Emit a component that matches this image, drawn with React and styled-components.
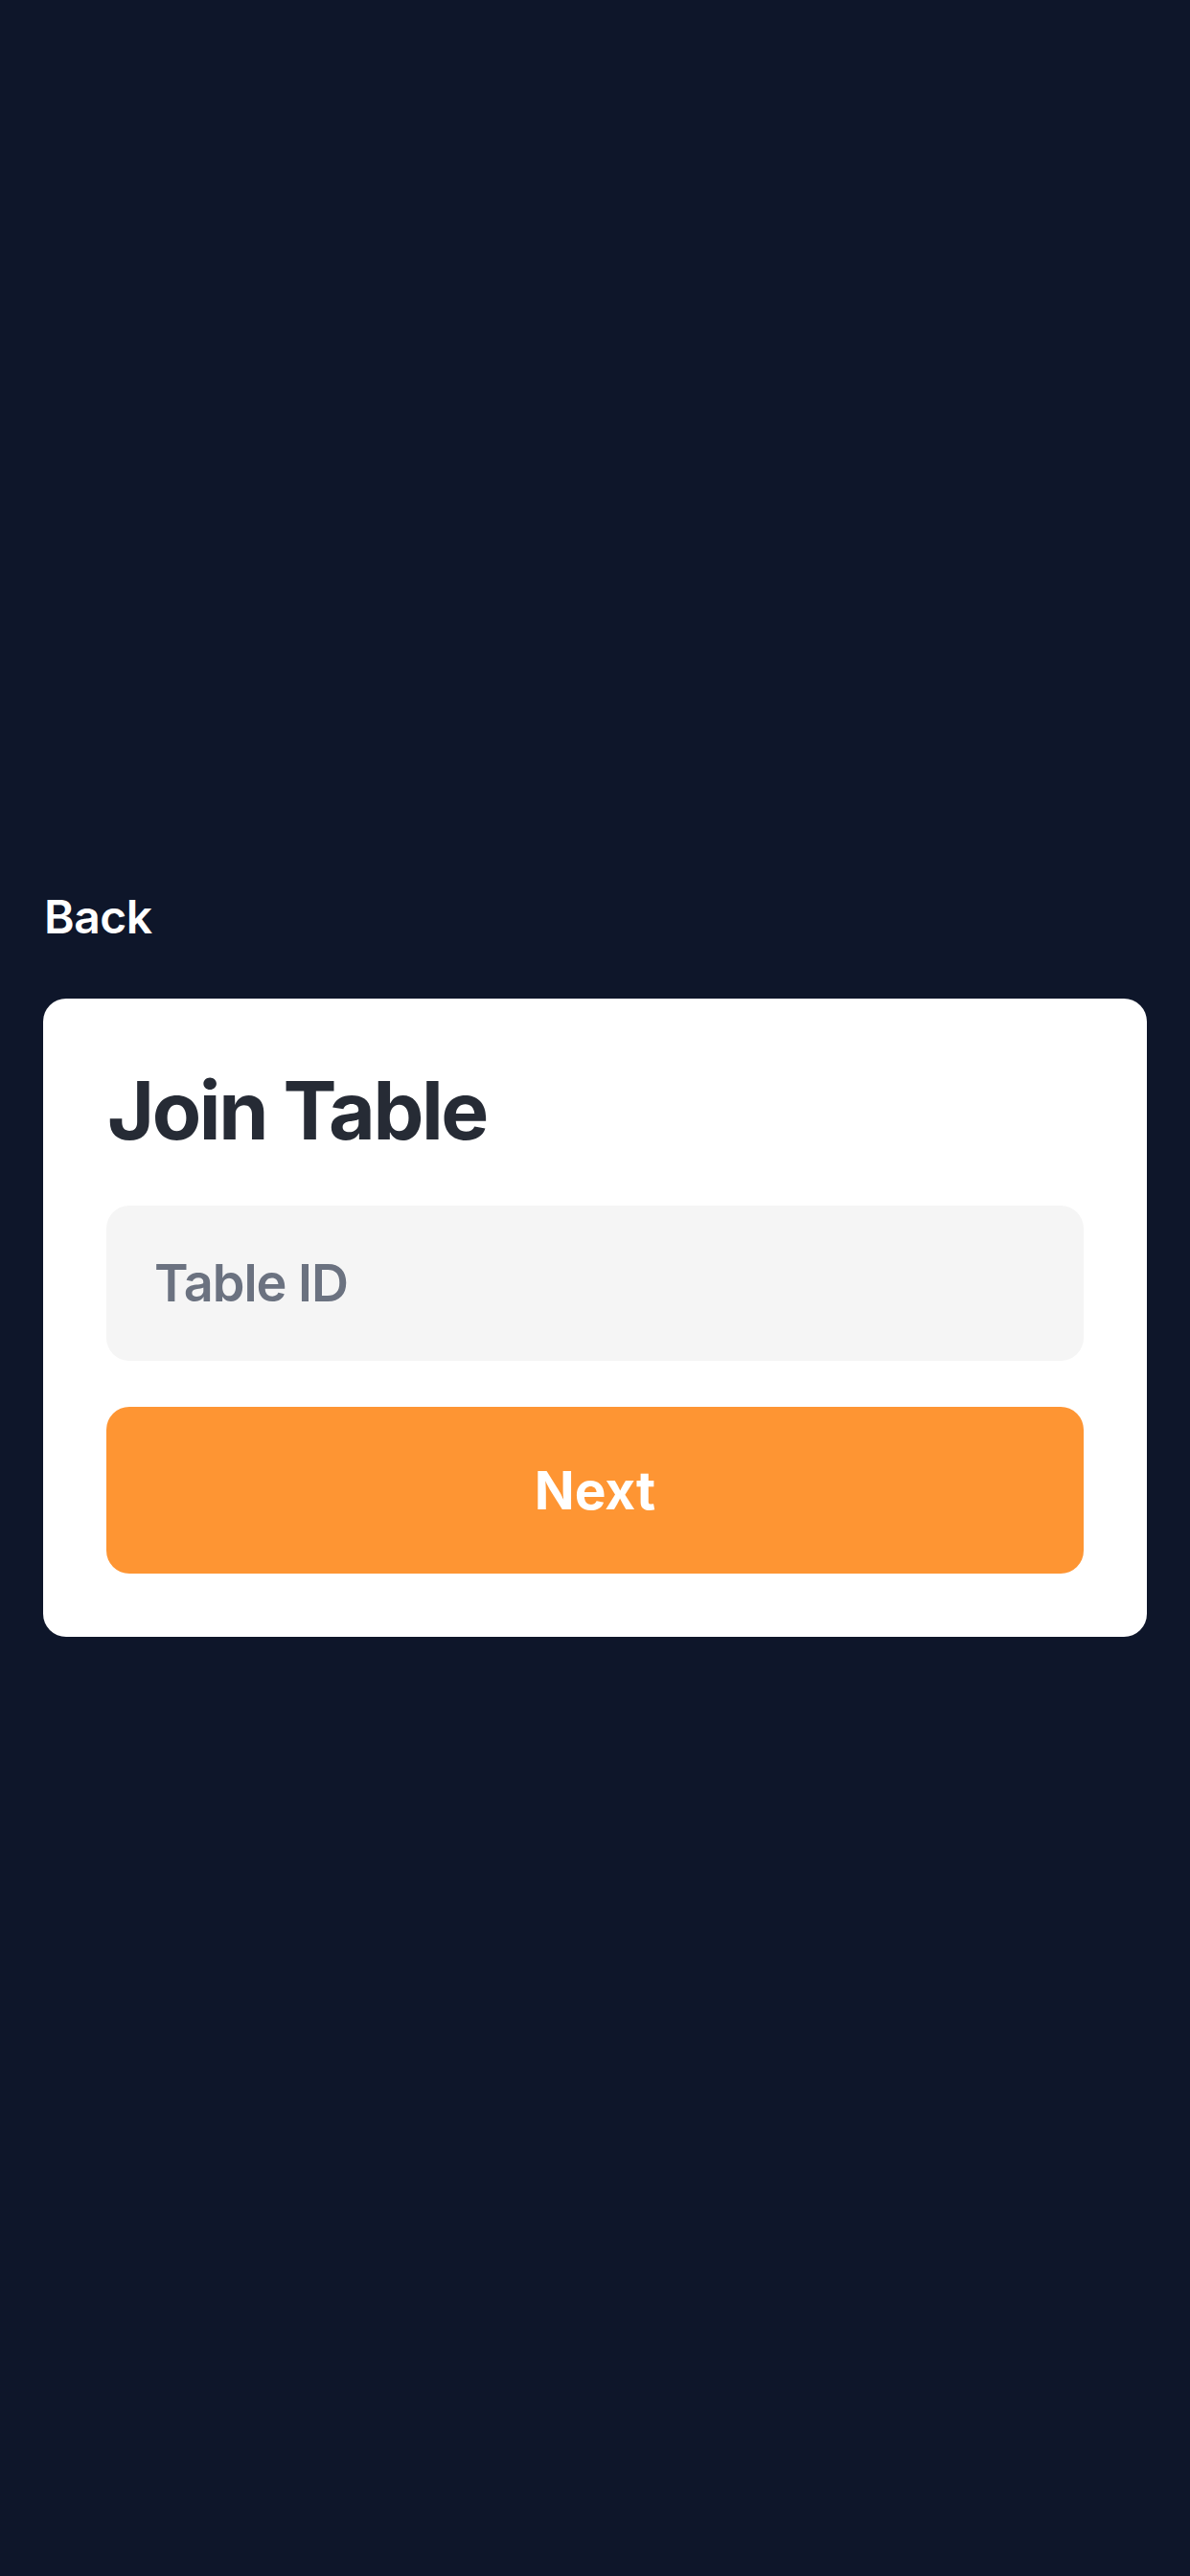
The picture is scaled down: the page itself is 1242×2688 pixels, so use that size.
import React, { useState } from 'react';
import styled, { createGlobalStyle } from 'styled-components';

const GlobalStyle = createGlobalStyle`
  * {
    box-sizing: border-box;
  }

  html, body {
    margin: 0;
    padding: 0;
    background: #0e162a;
  }

  body {
    font-family: Inter, "Noto Sans", "Liberation Sans", sans-serif;
    -webkit-font-smoothing: antialiased;
  }
`;

const JoinTable = ({ onBack, onNext }) => {
  const [tableId, setTableId] = useState('');

  const handleNext = (e) => {
    e.preventDefault();
    if (onNext) onNext(tableId);
  };

  return (
    <Screen>
      <BackButton type="button" onClick={onBack}>Back</BackButton>
      <Card onSubmit={handleNext}>
        <Title>Join Table</Title>
        <Input
          type="text"
          placeholder="Table ID"
          value={tableId}
          onChange={(e) => setTableId(e.target.value)}
        />
        <NextButton type="submit">Next</NextButton>
      </Card>
    </Screen>
  );
};

const App = () => (
  <>
    <GlobalStyle />
    <JoinTable />
  </>
);

const Screen = styled.div`
  min-height: 100vh;
  display: flex;
  flex-direction: column;
  justify-content: center;
  padding: 0 45px 53px;
  background: #0e162a;
`;

const BackButton = styled.button`
  align-self: flex-start;
  margin: 0 0 56px 1px;
  padding: 0;
  background: none;
  border: none;
  font-family: inherit;
  font-size: 48px;
  font-weight: 600;
  line-height: 58px;
  letter-spacing: -0.5px;
  color: #ffffff;
  cursor: pointer;
`;

const Card = styled.form`
  display: flex;
  flex-direction: column;
  gap: 48px;
  padding: 66px;
  background: #ffffff;
  border-radius: 24px;
`;

const Title = styled.h1`
  margin: 0 0 0 1px;
  font-size: 84px;
  font-weight: 700;
  line-height: 102px;
  letter-spacing: -2.4px;
  color: #262b35;
`;

const Input = styled.input`
  height: 162px;
  padding: 0 50px;
  border: none;
  border-radius: 24px;
  background: #f5f5f5;
  font-family: inherit;
  font-size: 54px;
  font-weight: 600;
  letter-spacing: -1px;
  color: #262b35;
  outline: none;

  &::placeholder {
    color: #6b7280;
    font-weight: 600;
  }
`;

const NextButton = styled.button`
  height: 174px;
  border: none;
  border-radius: 24px;
  background: #fe9533;
  font-family: inherit;
  font-size: 55px;
  font-weight: 700;
  color: #ffffff;
  cursor: pointer;
`;

export default App;
